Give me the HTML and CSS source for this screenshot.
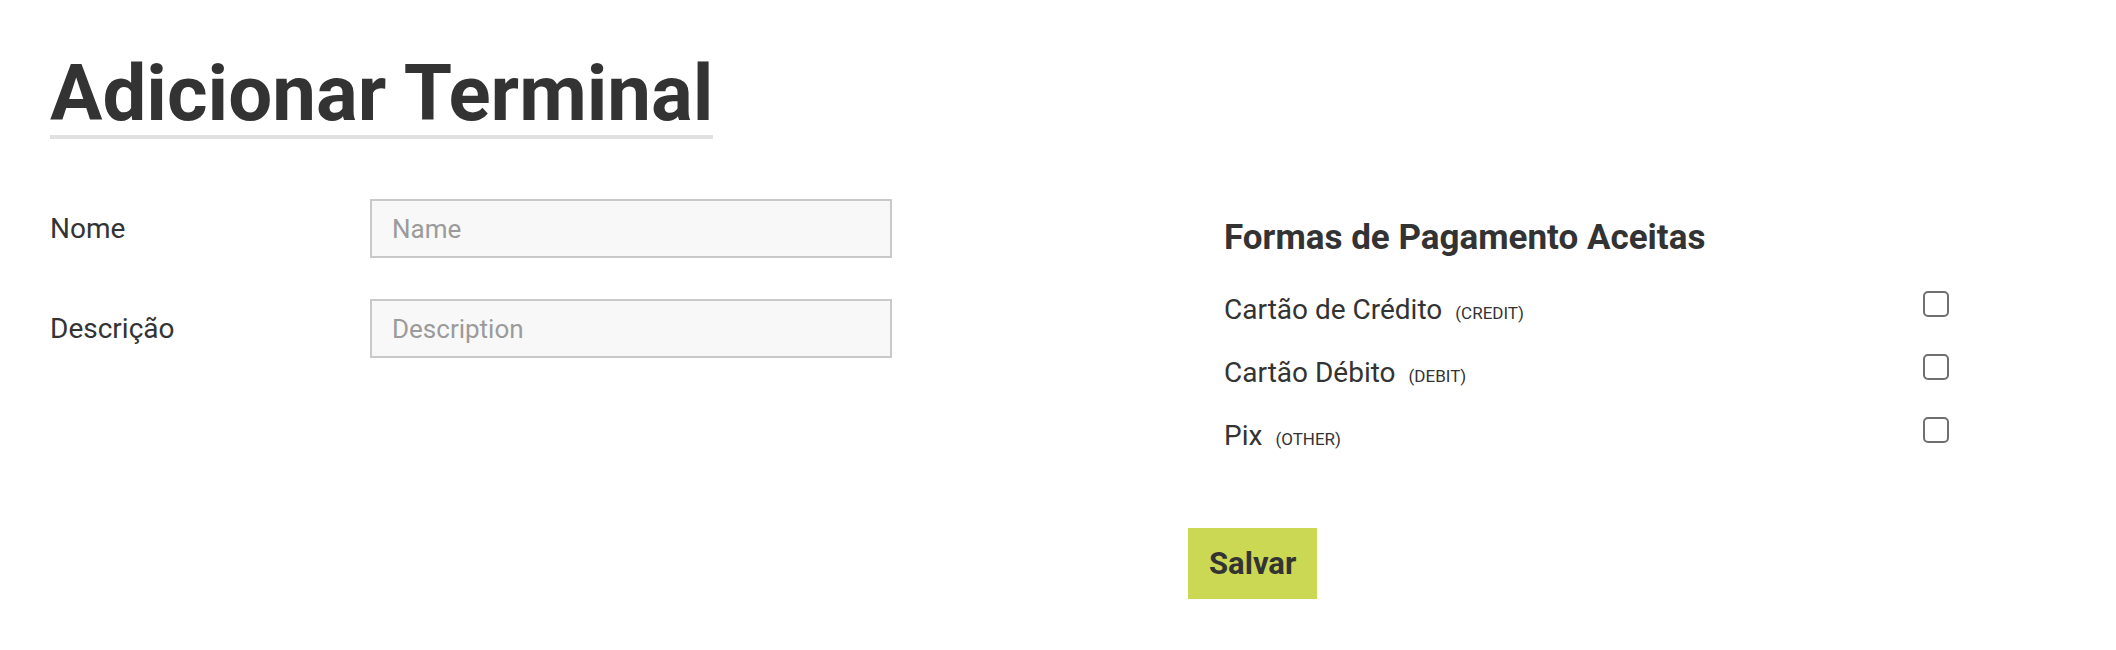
FILE: index.html
```html
<!DOCTYPE html>
<html lang="pt-BR">
<head>
<meta charset="utf-8">
<title>Adicionar Terminal</title>
<link rel="stylesheet" href="styles.css">
</head>
<body>
<div class="page">
  <h1 class="title">Adicionar Terminal</h1>
  <div class="content">
    <div class="form-col">
      <div class="form-row">
        <label class="field-label" for="name">Nome</label>
        <input class="field-input" id="name" type="text" placeholder="Name">
      </div>
      <div class="form-row">
        <label class="field-label" for="desc">Descrição</label>
        <input class="field-input" id="desc" type="text" placeholder="Description">
      </div>
    </div>
    <div class="side-col">
      <div class="payments">
        <h2 class="payments-title">Formas de Pagamento Aceitas</h2>
        <div class="pay-list">
          <label class="pay-row">
            <span class="pay-label">Cartão de Crédito<small class="pay-code">(CREDIT)</small></span>
            <input class="pay-check" type="checkbox">
          </label>
          <label class="pay-row">
            <span class="pay-label">Cartão Débito<small class="pay-code">(DEBIT)</small></span>
            <input class="pay-check" type="checkbox">
          </label>
          <label class="pay-row">
            <span class="pay-label">Pix<small class="pay-code">(OTHER)</small></span>
            <input class="pay-check" type="checkbox">
          </label>
        </div>
      </div>
      <button class="save-btn" type="button">Salvar</button>
    </div>
  </div>
</div>
</body>
</html>
```
FILE: styles.css
```css
* { box-sizing: border-box; }

body {
  margin: 0;
  background: #ffffff;
  color: #333333;
  font-family: Roboto, "Liberation Sans", Arial, sans-serif;
}

.page {
  padding: 50px 50px 0;
}

.title {
  display: inline-block;
  margin: 2px 0 0;
  font-size: 78px;
  font-weight: 700;
  line-height: 83.4px;
  border-bottom: 4px solid #e0e0e0;
}

.content {
  display: grid;
  grid-template-columns: 1138px 797px;
  margin-top: 60px;
}

.form-col {
  display: flex;
  flex-direction: column;
  gap: 41px;
}

.form-row {
  display: grid;
  grid-template-columns: 320px 522px;
  align-items: center;
}

.field-label {
  font-size: 28px;
}

.field-input {
  height: 59px;
  margin: 0;
  padding: 0 20px;
  border: 2px solid #c9c9c9;
  border-radius: 0;
  background: #f8f8f8;
  font-family: inherit;
  font-size: 26px;
  color: #333333;
  outline: none;
}

.field-input::placeholder {
  color: #9b9b9b;
}

.payments {
  padding: 0 36px;
}

.payments-title {
  margin: 18px 0 35px;
  font-size: 35px;
  font-weight: 700;
  line-height: 41px;
}

.pay-list {
  display: flex;
  flex-direction: column;
  gap: 30px;
}

.pay-row {
  display: flex;
  justify-content: space-between;
  align-items: flex-start;
  height: 33px;
  line-height: 33px;
  font-size: 28px;
}

.pay-code {
  margin-left: 13px;
  font-size: 17px;
}

.pay-check {
  appearance: none;
  -webkit-appearance: none;
  width: 26px;
  height: 26px;
  margin: -2px 0 0;
  border: 2px solid #6f6f6f;
  border-radius: 5px;
  background: #ffffff;
}

.save-btn {
  display: block;
  margin-top: 76px;
  padding: 17px 21px;
  border: none;
  border-radius: 0;
  background: #cbd853;
  color: #333333;
  font-family: inherit;
  font-size: 31px;
  font-weight: 700;
  line-height: 37px;
}
```
